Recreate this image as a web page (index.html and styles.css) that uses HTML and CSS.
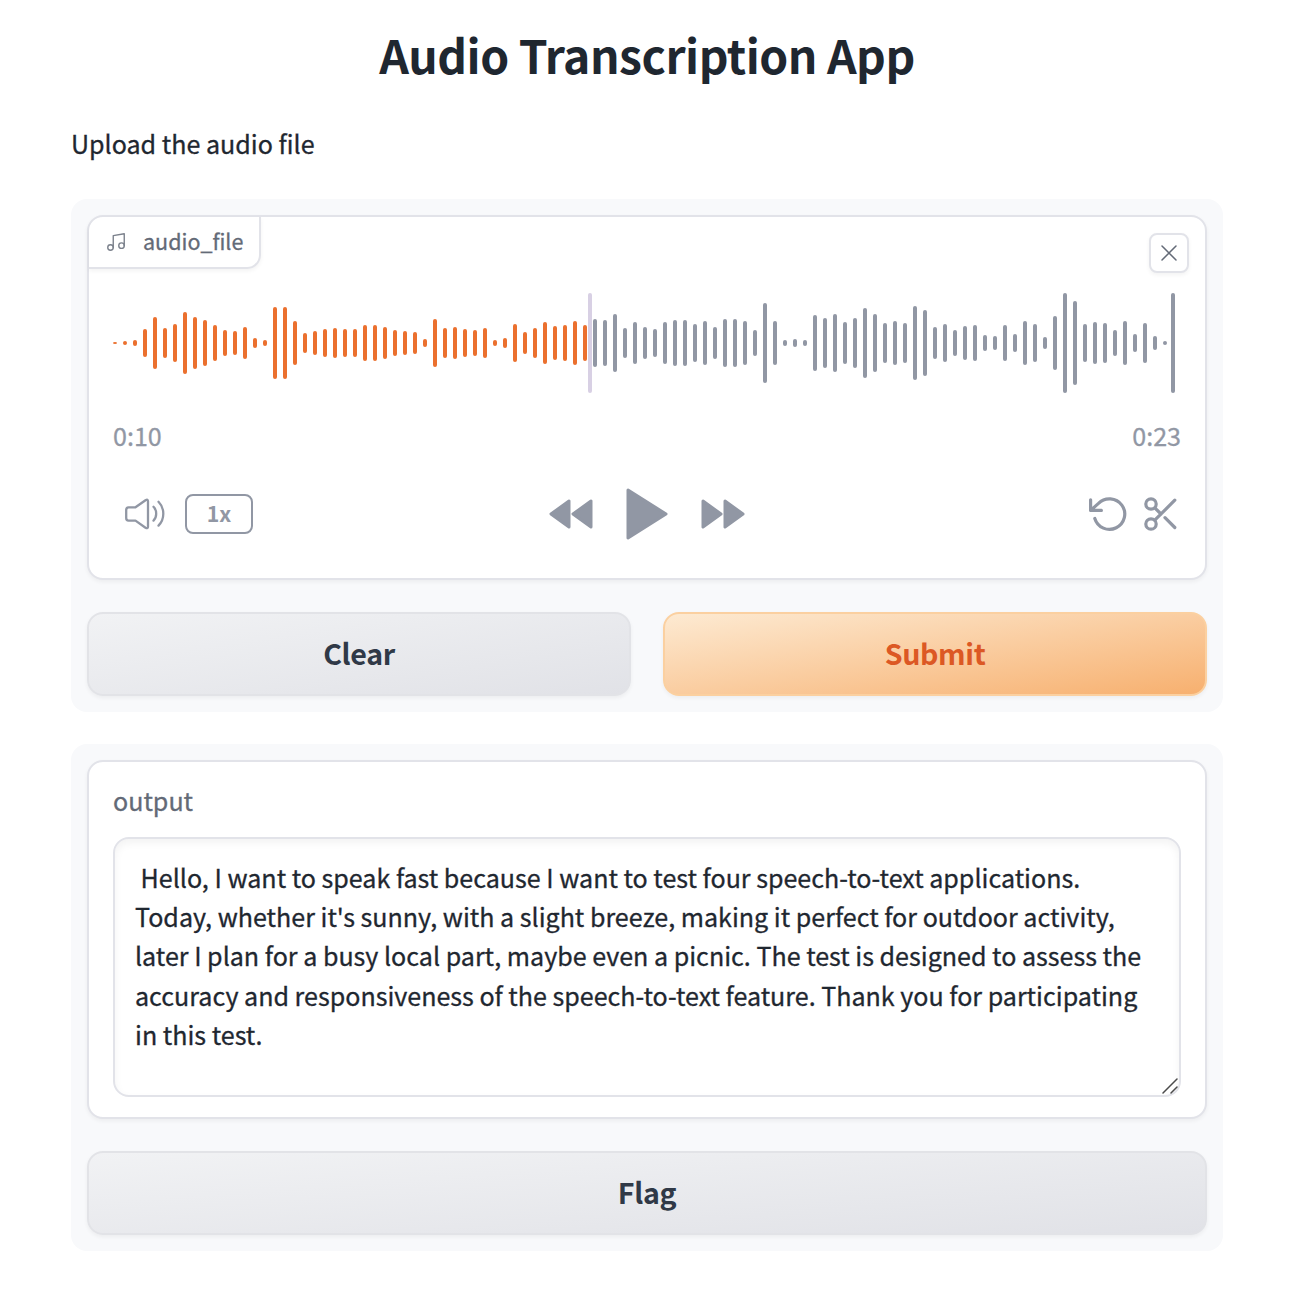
FILE: index.html
```html
<!DOCTYPE html>
<html lang="en">
<head>
<meta charset="utf-8">
<title>Audio Transcription App</title>
<link rel="stylesheet" href="styles.css">
</head>
<body>
<main class="app">
  <h1 class="title">Audio Transcription App</h1>
  <p class="description">Upload the audio file</p>
  <section class="panel">
    <div class="block audio">
      <div class="tag">
        <svg class="tag-icon" viewBox="0 0 24 24"><path d="M9 18V5l12-2v13"/><circle cx="6" cy="18" r="3"/><circle cx="18" cy="16" r="3"/></svg>
        <span class="tag-text">audio_file</span>
      </div>
      <button class="close" aria-label="Clear audio"><svg viewBox="0 0 16 16"><path d="M1 1l14 14M15 1L1 15"/></svg></button>
      <svg class="wave" id="wave" viewBox="0 0 1068 100"></svg>
      <div class="times"><span>0:10</span><span>0:23</span></div>
      <div class="controls">
        <div class="group">
          <svg class="volume" viewBox="0 0 42 34"><path d="M4.5 10.3Q2.2 10.3 2.2 13V21Q2.2 23.6 4.5 23.6H11.5L21.5 30.7Q24 32 24 29.5V4.2Q24 1.8 21.5 3.2L11.5 10.3Z"/><path d="M29.5 9.8c3.6 3.6 3.6 10.3 0 13.8M34.5 4.8c6.4 6.5 6.4 17.3 0 23.8"/></svg>
          <button class="speed">1x</button>
        </div>
        <div class="group playback">
          <svg class="skip" viewBox="0 0 44 32"><path d="M2 16L20 3V29ZM24 16L42 3V29Z"/></svg>
          <svg class="play" viewBox="0 0 42 52"><path d="M2 2L40 26L2 50Z"/></svg>
          <svg class="skip" viewBox="0 0 44 32"><path d="M2 3L20 16L2 29ZM24 3L42 16L24 29Z"/></svg>
        </div>
        <div class="group edit">
          <svg class="undo" viewBox="0 0 38 36"><path d="M1.6 3.8V14.4H12.4M1.6 14.4L9.5 7.4A15.3 15.3 0 1 1 5.8 22.5"/></svg>
          <svg class="cut" viewBox="0 0 34 36"><circle cx="7" cy="8" r="5.2"/><circle cx="7" cy="28" r="5.2"/><path d="M10.8 24.2L30.8 4.2M10.8 11.8L17 18M21 21.7L30.8 31.5"/></svg>
        </div>
      </div>
    </div>
    <div class="actions">
      <button class="btn">Clear</button>
      <button class="btn primary">Submit</button>
    </div>
  </section>
  <section class="panel">
    <div class="block result">
      <label class="label" for="output">output</label>
      <div class="field" id="output"><p class="text"><span class="line first">Hello, I want to speak fast because I want to test four speech-to-text applications.</span><span class="line">Today, whether it's sunny, with a slight breeze, making it perfect for outdoor activity,</span><span class="line">later I plan for a busy local part, maybe even a picnic. The test is designed to assess the</span><span class="line">accuracy and responsiveness of the speech-to-text feature. Thank you for participating</span><span class="line">in this test.</span></p>
        <svg class="grip" viewBox="0 0 16 16"><path d="M1 15L15 1M9 15L15 9"/></svg>
      </div>
    </div>
    <button class="btn">Flag</button>
  </section>
</main>
<script src="wave.js"></script>
</body>
</html>
```

FILE: styles.css
```css
* { box-sizing: border-box; }
body {
  margin: 0;
  background: #fff;
  color: #1f2937;
  font: 25.07px/39.2px "Noto Sans CJK SC", "Open Sans", sans-serif;
  -webkit-text-stroke: 0.3px currentColor;
}
button { font: inherit; margin: 0; padding: 0; }
svg { display: block; flex: none; fill: none; stroke-linecap: round; stroke-linejoin: round; }
.app { width: 1152px; margin-left: 71px; padding-top: 20px; }
.title { margin: 0; height: 67px; font-size: 46.3px; letter-spacing: -.5px; line-height: 67px; font-weight: 700; text-align: center; color: #1f2730; -webkit-text-stroke: 0; }
.description { margin: 37px 0 36px; height: 39px; color: #1f2730; }
.panel {
  display: flex;
  flex-direction: column;
  gap: 32px;
  padding: 16px;
  margin-bottom: 32px;
  border-radius: 16px;
  background: #f8f9fb;
}
.block { position: relative; border: 2px solid #e2e3e9; border-radius: 16px; background: #fff; box-shadow: 0 2px 4px rgba(0,0,0,.05); }
.audio { height: 365px; padding: 76px 24px 0; color: #9197a4; }
.tag {
  position: absolute; top: 0; left: 0;
  display: flex; align-items: center; gap: 16px;
  width: 172px; height: 52px; padding-left: 16px;
  border: solid #e2e3e9; border-width: 0 2px 2px 0;
  border-radius: 14px 0 14px 0;
  box-shadow: 0 2px 4px rgba(0,0,0,.05);
  color: #636a77; font-size: 21.5px;
}
.tag-text { padding-bottom: 2px; }
.tag-icon { width: 22px; height: 22px; stroke: #7b818c; stroke-width: 1.5; }
.close {
  position: absolute; top: 16px; right: 16px;
  display: grid; place-items: center;
  width: 40px; height: 40px;
  border: 2px solid #e2e3e9; border-radius: 8px; background: #fff;
  box-shadow: 0 2px 4px rgba(0,0,0,.05);
}
.close svg { width: 16px; height: 16px; stroke: #636a77; stroke-width: 1.5; }
.wave { width: 1068px; height: 100px; fill: #9197a4; }
.wave .played { fill: #eb702e; }
.wave .cursor { fill: #d8d0e4; }
.times { display: flex; justify-content: space-between; margin-top: 23px; }
.controls { display: grid; grid-template-columns: 1fr auto 1fr; align-items: center; margin-top: 33px; height: 52px; }
.group { display: flex; align-items: center; }
.volume { width: 42px; height: 34px; margin: 0 19px 0 11px; stroke: #9197a4; stroke-width: 2.3; }
.speed { width: 68px; height: 40px; padding-bottom: 2px; border: 2px solid #9197a4; border-radius: 8px; background: #fff; color: #9197a4; font-size: 21.3px; font-weight: 700; line-height: 34px; }
.playback { gap: 33px; }
.skip { width: 44px; height: 32px; }
.play { width: 42px; height: 52px; }
.playback svg { fill: #9197a4; stroke: #9197a4; stroke-width: 3; }
.edit { justify-content: flex-end; gap: 17px; padding-right: 3px; }
.edit svg { height: 36px; stroke: #9197a4; stroke-width: 3.2; }
.undo { width: 38px; }
.cut { width: 34px; }
.actions { display: grid; grid-template-columns: 1fr 1fr; gap: 32px; }
.btn {
  height: 84px; padding-bottom: 2px;
  border: 2px solid #e2e3e7; border-radius: 16px;
  background: linear-gradient(to bottom right, #f1f2f4, #e1e2e7);
  box-shadow: 0 2px 4px rgba(0,0,0,.05);
  color: #303947; font-size: 28.6px; letter-spacing: -.35px; font-weight: 700; line-height: 78px;
}
.speed, .btn { -webkit-text-stroke: 0; }
.primary { border-color: #fbd0a0; background: linear-gradient(to bottom right, #fdead2, #f7b06f); color: #dc5824; }
.result { height: 359px; padding: 19px 24px 20px; }
.label { display: block; height: 39px; margin-bottom: 17px; color: #636a77; }
.field { position: relative; height: 260px; padding: 19px 20px; border: 2px solid #e2e3e9; border-radius: 16px; box-shadow: inset 0 4px 8px rgba(0,0,0,.05); color: #1f2730; }
.text { margin: 0; }
.line { display: block; white-space: nowrap; }
.first { padding-left: 5.6px; }
.grip { position: absolute; right: 1px; bottom: 1px; width: 16px; height: 16px; stroke: #4b4b4b; stroke-width: 1.5; }
```

FILE: wave.js
```js
const heights = [
  2, 4, 6, 28, 52, 30, 38, 62, 52, 46, 36, 26, 24, 32, 10, 6, 72, 72, 44, 20, 24, 28, 30, 28,
  28, 36, 36, 32, 26, 24, 22, 8, 48, 30, 32, 28, 26, 30, 6, 10, 38, 22, 30, 42, 34, 36, 44, 36,
  48, 46, 58, 30, 42, 32, 28, 42, 46, 46, 38, 44, 32, 48, 48, 44, 26, 80, 44, 6, 8, 6, 56, 50,
  58, 42, 50, 70, 58, 40, 44, 40, 74, 66, 32, 38, 26, 34, 36, 16, 14, 36, 18, 44, 38, 12, 54,
  100, 84, 38, 42, 40, 26, 44, 18, 40, 14, 4
];
const wave = document.getElementById("wave");
function bar(x, height, name) {
  const rect = document.createElementNS("http://www.w3.org/2000/svg", "rect");
  const attrs = { x, y: 50 - height / 2, width: 4, height, rx: 2, ry: Math.min(2, height / 2), class: name };
  for (const key in attrs) rect.setAttribute(key, attrs[key]);
  wave.append(rect);
}
heights.forEach((h, i) => bar(i * 10, h, i < 48 ? "played" : "rest"));
bar(1058, 100, "rest");
bar(475, 100, "cursor");
```
